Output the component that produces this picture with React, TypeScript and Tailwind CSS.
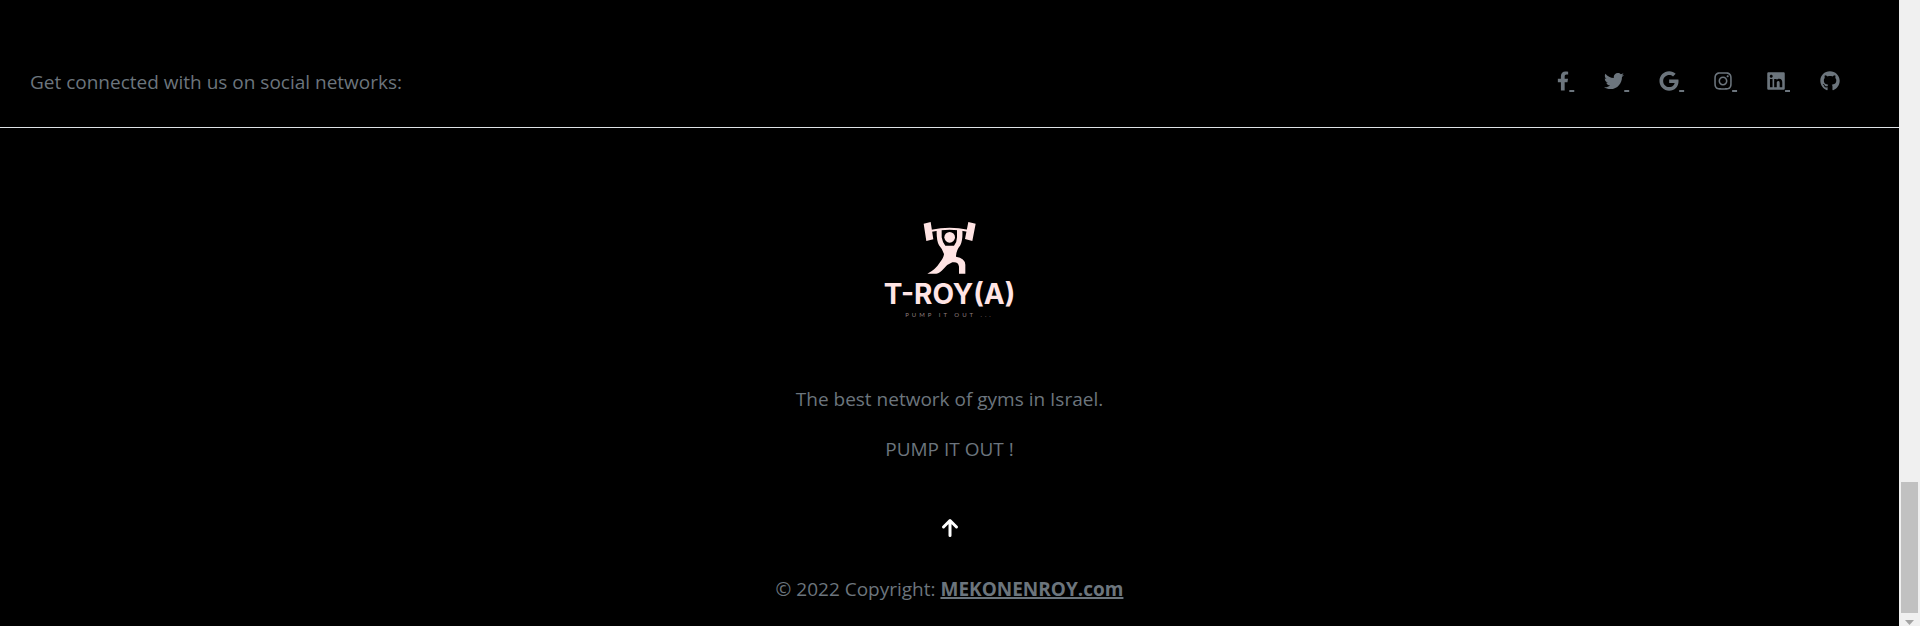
import type { ReactNode } from 'react';
import { FaFacebookF, FaTwitter, FaGoogle, FaInstagram, FaLinkedin, FaGithub } from 'react-icons/fa';

type Social = { name: string; href: string; icon: ReactNode };

const socials: Social[] = [
  { name: 'Facebook', href: '#facebook', icon: <FaFacebookF className="inline-block h-5 w-3 align-[-2px]" /> },
  { name: 'Twitter', href: '#twitter', icon: <FaTwitter className="inline-block h-5 w-5 align-[-2px]" /> },
  { name: 'Google', href: '#google', icon: <FaGoogle className="inline-block h-5 w-5 align-[-2px]" /> },
  { name: 'Instagram', href: '#instagram', icon: <FaInstagram className="inline-block h-5 w-[18px] align-[-2px]" /> },
  { name: 'LinkedIn', href: '#linkedin', icon: <FaLinkedin className="inline-block h-5 w-[18px] align-[-2px]" /> },
  { name: 'GitHub', href: '#github', icon: <FaGithub className="inline-block h-5 w-5 align-[-2px]" /> },
];

function SocialBar() {
  return (
    <section className="flex items-center justify-between border-b border-[#dee2e6] px-[30px] pb-[30px] pt-[67px]">
      <span>Get connected with us on social networks:</span>
      <nav aria-label="Social networks" className="mr-[29px] flex gap-[30px]">
        {socials.map((s, i) => (
          <a key={s.name} href={s.href} aria-label={s.name} className="underline decoration-2 underline-offset-1">
            {s.icon}
            {i < socials.length - 1 && '\u00a0'}
          </a>
        ))}
      </nav>
    </section>
  );
}

function Logo() {
  return (
    <div className="flex flex-col items-center font-['Inter',sans-serif] text-[#ffe4e4]">
      <svg width="60" height="60" viewBox="0 0 180 180" fill="currentColor" aria-hidden="true">
        {/* barbell */}
        <path d="M14 17L35 12L43 64L22 69ZM170 17L148 12L138 63L160 69Z" />
        <path d="M38 38Q92 26 146 38" fill="none" stroke="currentColor" strokeWidth="6" />
        {/* head */}
        <circle cx="92" cy="58" r="16" />
        {/* arms, torso and legs */}
        <path d="M53 36L68 34L68 58Q70 72 79 83L105 83Q114 72 114 58L114 34L130 36Q132 66 124 82Q111 98 111 116Q138 120 139 140L139 167L120 167L120 146Q118 130 100 133Q86 138 74 152Q62 165 52 167L25 167Q50 154 62 134Q74 120 75 108Q71 94 60 82Q52 66 53 36Z" />
      </svg>
      <span className="text-[28px] font-bold leading-8">T-ROY(A)</span>
      <span className="font-['Lato',sans-serif] text-[6px] leading-[10px] tracking-[3px] text-[#8f7f7f]">PUMP IT OUT ...</span>
    </div>
  );
}

function Scrollbar() {
  return (
    <div aria-hidden="true" className="flex w-[21px] shrink-0 flex-col items-center justify-end bg-[#f0f0f0]">
      <div className="h-[131px] w-[17px] bg-[#c1c1c1]" />
      <svg width="9" height="13" viewBox="0 0 9 13" className="shrink-0">
        <path d="M0 7h9L4.500 12z" fill="#a3a3a3" />
      </svg>
    </div>
  );
}

export default function App() {
  return (
    <div className="flex min-h-screen bg-black font-['Open_Sans','Noto_Sans',sans-serif] text-[19px] leading-[30px] text-[#6c757d]">
      <footer className="min-w-0 flex-1">
        <SocialBar />
        <div className="flex flex-col items-center pt-[90px] text-center">
          <Logo />
          <p className="mt-16">The best network of gyms in Israel.</p>
          <p className="mt-5">PUMP IT OUT !</p>
          <button type="button" aria-label="Back to top" className="mt-[54px] flex text-white">
            <svg width="18" height="20" viewBox="0 0 18 20" fill="none" stroke="currentColor" strokeWidth="3" strokeLinecap="round" strokeLinejoin="round">
              <path d="M9 17.500V3M2.500 9L9 2.500L15.500 9" />
            </svg>
          </button>
        </div>
        <p className="mt-9 text-center">
          © 2022 Copyright: <a href="#mekonenroy" className="font-bold underline decoration-2 underline-offset-1">MEKONENROY.com</a>
        </p>
      </footer>
      <Scrollbar />
    </div>
  );
}
